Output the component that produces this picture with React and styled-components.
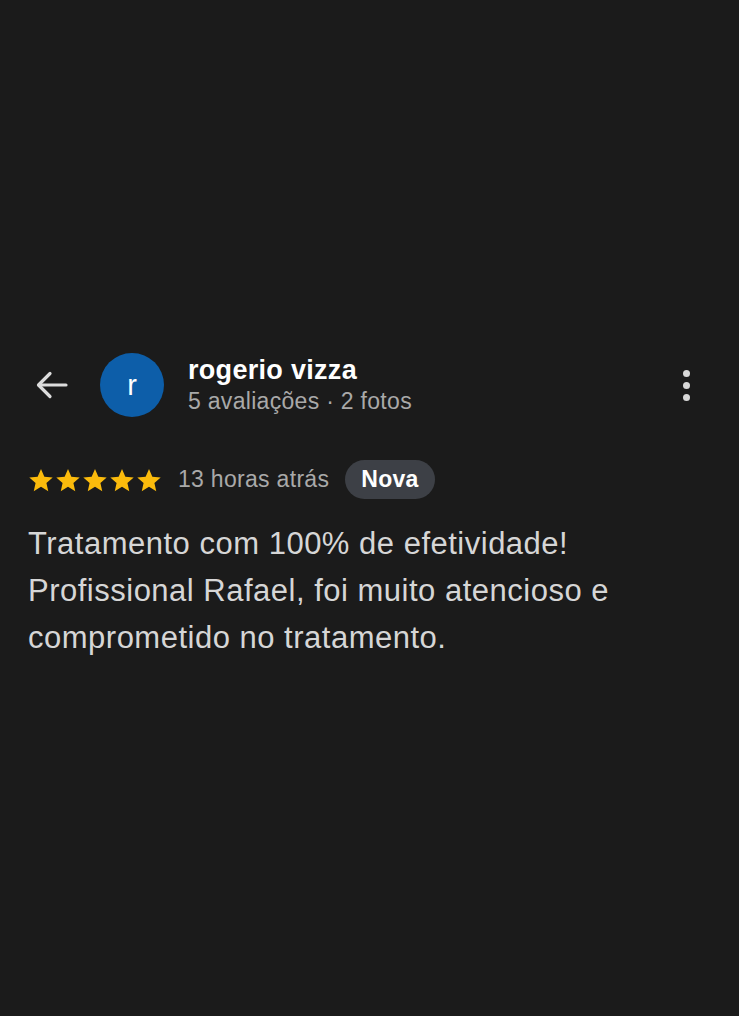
import React from "react";
import styled, { createGlobalStyle } from "styled-components";

const Global = createGlobalStyle`
  html, body {
    margin: 0;
    padding: 0;
    background: #1b1b1b;
    font-family: "Liberation Sans", Arial, sans-serif;
  }
`;

const Page = styled.div`
  min-height: 1016px;
  box-sizing: border-box;
  padding: 353px 0 0 0;
  background: #1b1b1b;
`;

const Header = styled.div`
  display: flex;
  align-items: center;
  padding: 0 49px 0 35px;
`;

const BackButton = styled.div`
  width: 34px;
  height: 34px;
  display: flex;
  align-items: center;
  justify-content: center;
  margin-right: 31px;
`;

const Avatar = styled.div`
  width: 64px;
  height: 64px;
  border-radius: 50%;
  background: #0d5ea9;
  color: #ffffff;
  font-size: 29px;
  display: flex;
  align-items: center;
  justify-content: center;
  margin-right: 24px;
  flex-shrink: 0;
`;

const Info = styled.div`
  flex: 1;
  display: flex;
  flex-direction: column;
`;

const Name = styled.div`
  color: #ffffff;
  font-weight: 700;
  font-size: 27px;
  letter-spacing: 0.3px;
  line-height: 31px;
`;

const Meta = styled.div`
  color: #a9a9a9;
  font-size: 23px;
  letter-spacing: 0.3px;
  line-height: 30px;
`;

const Dots = styled.div`
  display: flex;
  flex-direction: column;
  gap: 5px;
  align-items: center;
`;

const Dot = styled.span`
  width: 7px;
  height: 7px;
  border-radius: 50%;
  background: #d8d8d8;
`;

const RatingRow = styled.div`
  display: flex;
  align-items: center;
  padding: 0 28px;
  margin-top: 43px;
`;

const Stars = styled.div`
  display: flex;
  gap: 1px;
  margin-right: 16px;
`;

const Time = styled.span`
  color: #a9a9a9;
  font-size: 23px;
  letter-spacing: 0.3px;
  margin-right: 16px;
`;

const Badge = styled.span`
  background: #3d4046;
  color: #ffffff;
  font-size: 23px;
  font-weight: 700;
  letter-spacing: 0.3px;
  height: 39px;
  padding: 0 16px;
  border-radius: 20px;
  display: flex;
  align-items: center;
`;

const Body = styled.p`
  margin: 21px 0 0 0;
  padding: 0 28px;
  color: #d6d6d6;
  font-size: 31px;
  letter-spacing: 0.5px;
  line-height: 47px;
`;

const Star = () => (
  <svg width="26" height="26" viewBox="0 0 24 24">
    <path
      fill="#fbbb0c"
      d="M12 1.8l3.1 7.1 7.7.7-5.8 5.1 1.7 7.6L12 18.3l-6.7 4 1.7-7.6L1.2 9.6l7.7-.7z"
    />
  </svg>
);

const App = () => (
  <Page>
    <Global />
    <Header>
      <BackButton>
        <svg width="32" height="28" viewBox="0 0 32 28" fill="none" stroke="#dcdcdc" strokeWidth="3.2" strokeLinecap="round" strokeLinejoin="round">
          <path d="M30 14H3" />
          <path d="M14 2.5L2.5 14L14 25.5" />
        </svg>
      </BackButton>
      <Avatar>r</Avatar>
      <Info>
        <Name>rogerio vizza</Name>
        <Meta>5 avaliações · 2 fotos</Meta>
      </Info>
      <Dots>
        <Dot />
        <Dot />
        <Dot />
      </Dots>
    </Header>
    <RatingRow>
      <Stars>
        {[0, 1, 2, 3, 4].map(i => (
          <Star key={i} />
        ))}
      </Stars>
      <Time>13 horas atrás</Time>
      <Badge>Nova</Badge>
    </RatingRow>
    <Body>
      Tratamento com 100% de efetividade!
      <br />
      Profissional Rafael, foi muito atencioso e
      <br />
      comprometido no tratamento.
    </Body>
  </Page>
);

export default App;
